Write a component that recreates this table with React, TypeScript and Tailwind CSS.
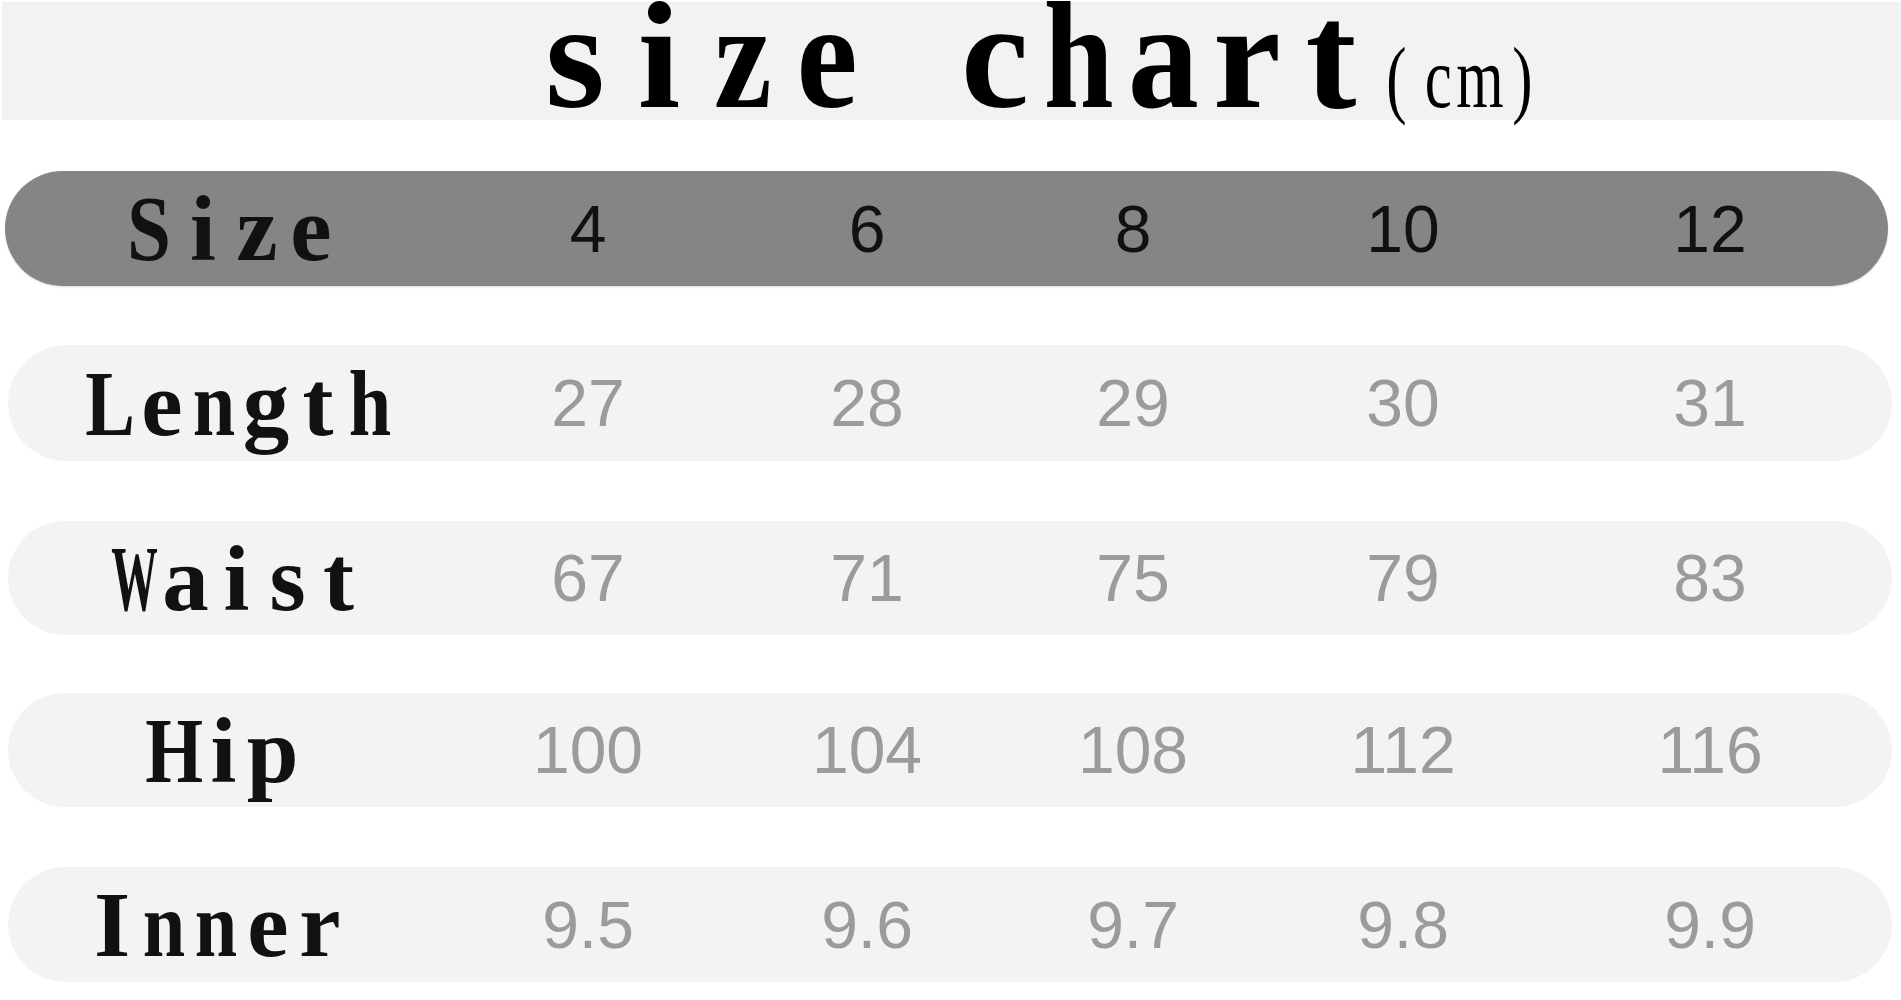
import React from "react";

const serif = { fontFamily: '"Liberation Serif", "Times New Roman", serif' };

type Glyph = { ch: string; cls?: string };

const titleGlyphs: Glyph[] = [
  { ch: "s" },
  { ch: "i" },
  { ch: "z", cls: "scale-x-[0.85]" },
  { ch: "e", cls: "scale-x-[0.9]" },
  { ch: " " },
  { ch: "c" },
  { ch: "h", cls: "scale-x-[0.82]" },
  { ch: "a", cls: "scale-x-[0.93]" },
  { ch: "r" },
  { ch: "t" },
];

const unitGlyphs = ["(", "c", "m", ")"];

function labelScale(ch: string): string {
  switch (ch) {
    case "W":
      return "scale-x-[0.5]";
    case "H":
      return "scale-x-[0.8]";
    case "L":
      return "scale-x-[0.8]";
    case "S":
      return "scale-x-[0.85]";
    case "n":
      return "scale-x-[0.82]";
    case "h":
      return "scale-x-[0.82]";
    default:
      return "";
  }
}

type Row = {
  label: string;
  pl: string;
  cell: string;
  h: string;
  mt: string;
  values: string[];
};

const rows: Row[] = [
  { label: "Length", pl: "pl-[76px]", cell: "w-[52px]", h: "h-[116px]", mt: "mt-[59px]", values: ["27", "28", "29", "30", "31"] },
  { label: "Waist", pl: "pl-[101px]", cell: "w-[51px]", h: "h-[114px]", mt: "mt-[60px]", values: ["67", "71", "75", "79", "83"] },
  { label: "Hip", pl: "pl-[142px]", cell: "w-[49px]", h: "h-[114px]", mt: "mt-[58px]", values: ["100", "104", "108", "112", "116"] },
  { label: "Inner", pl: "pl-[78px]", cell: "w-[52px]", h: "h-[115px]", mt: "mt-[60px]", values: ["9.5", "9.6", "9.7", "9.8", "9.9"] },
];

const cellGaps = ["", "ml-[79px]", "ml-[66px]", "ml-[70px]", "ml-[107px]"];

function Label({ text, pl, cell, width }: { text: string; pl: string; cell: string; width: string }) {
  return (
    <div className={`flex items-baseline shrink-0 ${width} ${pl}`} style={serif}>
      {text.split("").map((ch, i) => (
        <span
          key={i}
          className={`flex justify-center shrink-0 ${cell} text-[93px] leading-none font-bold text-[#111]`}
        >
          <span className={`inline-block shrink-0 ${labelScale(ch)}`}>{ch}</span>
        </span>
      ))}
    </div>
  );
}

function Values({ values, color }: { values: string[]; color: string }) {
  return (
    <div className="flex items-center" style={{ fontFamily: '"Liberation Sans", Arial, sans-serif' }}>
      {values.map((v, i) => (
        <div key={i} className={`w-[200px] text-center text-[66px] leading-none ${color} ${cellGaps[i]}`}>
          {v}
        </div>
      ))}
    </div>
  );
}

export default function App() {
  return (
    <div className="w-[1901px] h-[1000px] bg-white overflow-hidden">
      <div className="mt-[2px] ml-[2px] h-[118px] bg-[#f2f2f2] flex items-start">
        <div className="flex items-baseline pl-[531px] text-black" style={serif}>
          {titleGlyphs.map((g, i) => (
            <span
              key={i}
              className="flex justify-center shrink-0 w-[84px] text-[153px] leading-[108px] font-bold whitespace-pre"
            >
              <span className={`inline-block shrink-0 ${g.cls ?? ""}`}>{g.ch}</span>
            </span>
          ))}
          <span className="inline-block w-[2px]" />
          {unitGlyphs.map((ch, i) => (
            <span key={i} className="flex justify-center shrink-0 w-[42px] text-[87px] leading-none font-normal">
              <span className="inline-block shrink-0 scale-x-[0.7]">{ch}</span>
            </span>
          ))}
        </div>
      </div>

      <div className="mt-[51px] ml-[5px] w-[1883px] h-[115px] rounded-full bg-[#858585] flex items-center shadow-[0_1px_2px_rgba(0,0,0,0.15)]">
        <Label text="Size" pl="pl-[117px]" cell="w-[54px]" width="w-[483px]" />
        <Values values={["4", "6", "8", "10", "12"]} color="text-[#111]" />
      </div>

      {rows.map((r) => (
        <div key={r.label} className={`${r.mt} ml-[8px] w-[1884px] ${r.h} rounded-full bg-[#f3f3f3] flex items-center`}>
          <Label text={r.label} pl={r.pl} cell={r.cell} width="w-[480px]" />
          <Values values={r.values} color="text-[#9b9b9b]" />
        </div>
      ))}
    </div>
  );
}
